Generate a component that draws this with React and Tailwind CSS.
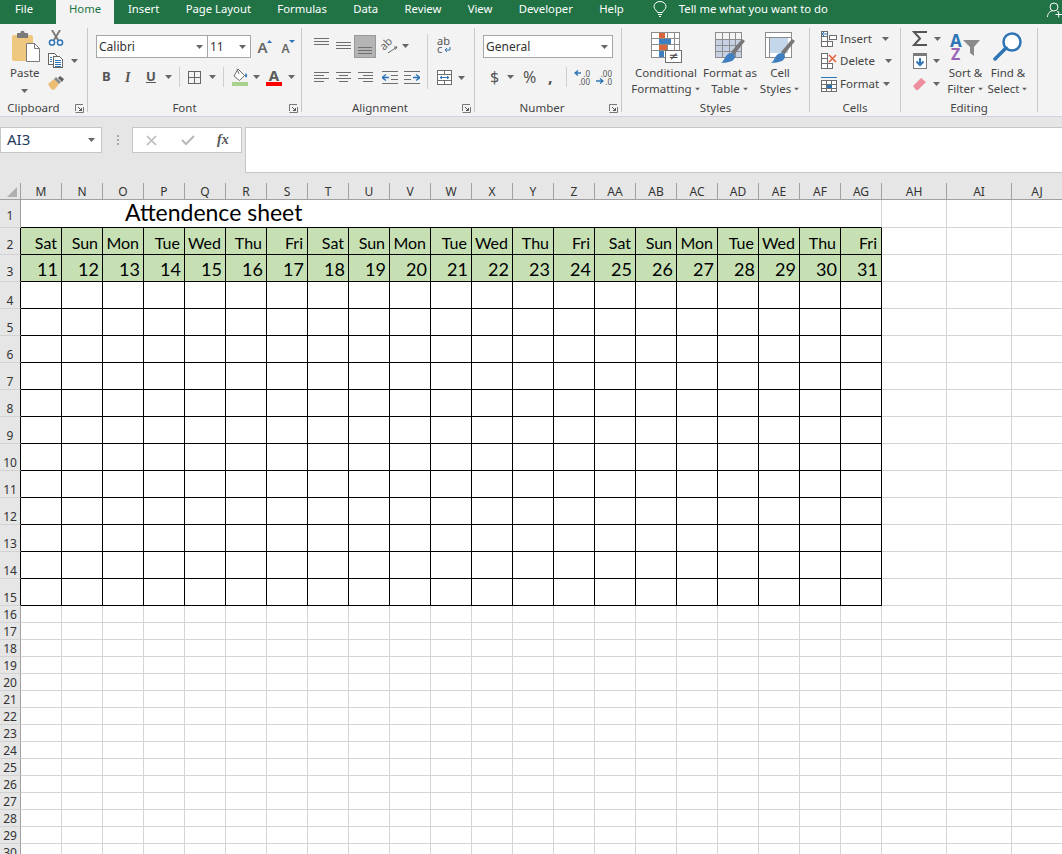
import React from "react";

const columns = ["M","N","O","P","Q","R","S","T","U","V","W","X","Y","Z","AA","AB","AC","AD","AE","AF","AG"];
const days = ["Sat","Sun","Mon","Tue","Wed","Thu","Fri","Sat","Sun","Mon","Tue","Wed","Thu","Fri","Sat","Sun","Mon","Tue","Wed","Thu","Fri"];
const dates = [11,12,13,14,15,16,17,18,19,20,21,22,23,24,25,26,27,28,29,30,31];
const rows = Array.from({ length: 30 }, (_, i) => i + 1);

function Caret({ className = "" }) {
  return (
    <svg width="7" height="4" viewBox="0 0 7 4" className={`shrink-0 ${className}`}>
      <path d="M0 0h7L3.5 4z" fill="#666" />
    </svg>
  );
}

function Sep({ className = "" }) {
  return <div className={`w-px shrink-0 bg-[#cfcfcf] ${className}`} />;
}

function Launcher() {
  return (
    <svg width="9" height="9" viewBox="0 0 9 9" className="shrink-0">
      <path d="M.5 7V.5H8M.5 8.5h8V3" fill="none" stroke="#777" />
      <path d="M3 3l3.5 3.5M6.5 4v2.5H4" fill="none" stroke="#555" />
    </svg>
  );
}

function Group({ label, className = "", labelClass = "", launcher = false, children }) {
  return (
    <div className={`mt-[4px] flex h-[84px] shrink-0 flex-col border-r border-[#c8c8c8] ${className}`}>
      <div className="h-[72px]">{children}</div>
      <div className="flex h-[12px] items-start">
        <div className={`flex-1 text-center text-[11.5px] leading-[16px] text-[#444] ${labelClass}`}>{label}</div>
        {launcher ? <div className="mr-[3px] mt-[4px]"><Launcher /></div> : null}
      </div>
    </div>
  );
}

function Combo({ text, className = "", caretClass = "" }) {
  return (
    <div className={`flex h-[23px] shrink-0 items-center justify-between border border-[#a6a6a6] bg-white pl-[2px] text-[12px] text-[#333] ${className}`}>
      <span>{text}</span>
      <Caret className={caretClass} />
    </div>
  );
}

function Lines({ d, w = 15, h = 8 }) {
  return (
    <svg width={w} height={h} viewBox={`0 0 ${w} ${h}`} className="shrink-0" shapeRendering="crispEdges">
      <path d={d} stroke="#6e6e6e" fill="none" />
    </svg>
  );
}

function Indent({ flip }) {
  return (
    <svg width="16" height="13" viewBox="0 0 16 13" className="shrink-0" shapeRendering="crispEdges">
      <path d={flip ? "M0 .5h16M0 12.5h16M0 4.5h7M0 8.5h7" : "M0 .5h16M0 12.5h16M9 4.5h7M9 8.5h7"} stroke="#6e6e6e" fill="none" />
      <path d={flip ? "M9 6.5h7M12 3.5l4 3-4 3" : "M0 6.5h7M4 3.5l-4 3 4 3"} stroke="#2f75b5" strokeWidth="1.4" fill="none" shapeRendering="auto" />
    </svg>
  );
}

function PasteIcon() {
  return (
    <svg width="30" height="32" viewBox="0 0 30 32" className="block">
      <rect x="1" y="5" width="21" height="26" rx="2" fill="#edc87e" />
      <rect x="6" y="3" width="11" height="5" fill="#7b7b7b" />
      <circle cx="11.5" cy="3" r="2.2" fill="#7b7b7b" />
      <path d="M15.5 13.5h8l5 5v13h-13z" fill="#fff" stroke="#7a7a7a" />
      <path d="M23.5 13.5v5h5" fill="none" stroke="#7a7a7a" />
    </svg>
  );
}

function ScissorsIcon() {
  return (
    <svg width="16" height="16" viewBox="0 0 16 16" className="block">
      <path d="M4 0l6 10M12 0L6 10" stroke="#757575" strokeWidth="1.8" fill="none" />
      <circle cx="4" cy="12.5" r="2.6" stroke="#2f75b5" strokeWidth="1.5" fill="none" />
      <circle cx="12" cy="12.5" r="2.6" stroke="#2f75b5" strokeWidth="1.5" fill="none" />
    </svg>
  );
}

function CopyIcon() {
  return (
    <svg width="15" height="15" viewBox="0 0 15 15" className="block shrink-0" shapeRendering="crispEdges">
      <path d="M.5.5h6l2 2v9h-8z" fill="#fff" stroke="#666" />
      <path d="M5.5 3.5h6l3 3v8h-9z" fill="#fff" stroke="#666" />
      <path d="M2 4h2M2 6h2M2 8h2M7 7h6M7 9h6M7 11h6M7 13h6" stroke="#2f75b5" />
    </svg>
  );
}

function PainterIcon() {
  return (
    <svg width="16" height="15" viewBox="0 0 16 15" className="block">
      <path d="M0 8l6-5 5 5-5 6-3-1z" fill="#edbd74" />
      <path d="M6 3l5 5 2-2-5-5z" fill="#8a8a8a" />
      <path d="M10 2l2-2 4 3-2 3z" fill="#5f5f5f" />
    </svg>
  );
}

function BordersIcon() {
  return (
    <svg width="13" height="13" viewBox="0 0 13 13" className="shrink-0" shapeRendering="crispEdges">
      <path d="M.5.5h12v12H.5zM6.5 0v13M0 6.5h13" fill="none" stroke="#666" />
    </svg>
  );
}

function FillIcon() {
  return (
    <svg width="16" height="18" viewBox="0 0 16 18" className="shrink-0">
      <path d="M6 1l6.5 6.5L7.5 12.5 2 8z" fill="#fff" stroke="#6e6e6e" />
      <path d="M5 1l2 5" stroke="#6e6e6e" />
      <path d="M14 5c1.5 2 1.5 4 0 4.5-1.5-.5-1.5-2.5 0-4.5z" fill="#2f75b5" />
      <rect y="14" width="16" height="4" fill="#a9d18e" />
    </svg>
  );
}

function FontColorIcon() {
  return (
    <svg width="16" height="18" viewBox="0 0 16 18" className="shrink-0 overflow-visible">
      <text x="8" y="13" textAnchor="middle" fontSize="15" fontWeight="700" fill="#5a5a5a" fontFamily="Noto Sans">A</text>
      <rect y="14" width="16" height="4" fill="#ff0000" />
    </svg>
  );
}

function GrowIcon({ down }) {
  return (
    <svg width="15" height="15" viewBox="0 0 15 15" className="shrink-0 overflow-visible">
      <text x="5.5" y="14" textAnchor="middle" fontSize={down ? 12 : 15} fontWeight="600" fill="#666" fontFamily="Noto Sans">A</text>
      <path d={down ? "M9 1h6l-3 3z" : "M10 4l2.5-3L15 4z"} fill="#2f75b5" />
    </svg>
  );
}

function OrientationIcon() {
  return (
    <svg width="16" height="17" viewBox="0 0 16 17" className="shrink-0 overflow-visible">
      <text x="1" y="14" transform="rotate(-45 1 14)" fontSize="11" fill="#666" fontFamily="Noto Sans">ab</text>
      <path d="M5 16l9-6M14 10l-3 0M14 10l-1.500 2.500" stroke="#666" fill="none" />
    </svg>
  );
}

function WrapIcon() {
  return (
    <svg width="14" height="17" viewBox="0 0 14 17" className="shrink-0 overflow-visible">
      <text x="0" y="8" fontSize="11" fill="#555" fontFamily="Noto Sans">ab</text>
      <text x="0" y="16" fontSize="11" fill="#555" fontFamily="Noto Sans">c</text>
      <path d="M13 10v3H8M10 11l-2 2 2 2" stroke="#2f75b5" fill="none" />
    </svg>
  );
}

function MergeIcon() {
  return (
    <svg width="15" height="15" viewBox="0 0 15 15" className="shrink-0" shapeRendering="crispEdges">
      <path d="M.5.5h14v14H.5zM0 4.500h15M0 10.500h15M7.500 0v4M7.500 11v4M.5 4.500v6M14.500 4.500v6" fill="#fff" stroke="#6e6e6e" />
      <path d="M3 7.500h9M3 7.500l2-1.500M3 7.500l2 1.500M12 7.500l-2-1.500M12 7.500l-2 1.500" stroke="#2f75b5" fill="none" shapeRendering="auto" />
    </svg>
  );
}

function DecimalIcon({ more }) {
  return (
    <svg width="16" height="15" viewBox="0 0 16 15" className="shrink-0 overflow-visible">
      <text x="16" y="6.500" textAnchor="end" fontSize="8" fill="#555" fontFamily="Noto Sans">{more ? ".00" : ".0"}</text>
      <text x="16" y="14.500" textAnchor="end" fontSize="8" fill="#555" fontFamily="Noto Sans">{more ? ".0" : ".00"}</text>
      {more ? (
        <path d="M0 11h6M4 8.500L7 11l-3 2.500" stroke="#2f75b5" strokeWidth="1.300" fill="none" />
      ) : (
        <path d="M7 3H1M4 .5L1 3l3 2.500" stroke="#2f75b5" strokeWidth="1.300" fill="none" />
      )}
    </svg>
  );
}

function CondFormatIcon() {
  return (
    <svg width="31" height="31" viewBox="0 0 31 31" className="block overflow-visible">
      <path d="M.5.5h28v25H.5zM8 0v26M16 0v26M23 0v26M0 6h29M0 12h29M0 18h29" fill="#fff" stroke="#8c8c8c" shapeRendering="crispEdges" />
      <rect x="8" y="1" width="6" height="5" fill="#d9653b" />
      <rect x="8" y="7" width="12" height="5" fill="#3f7fbf" />
      <rect x="8" y="13" width="8" height="5" fill="#d9653b" />
      <rect x="8" y="19" width="5" height="6" fill="#3f7fbf" />
      <rect x="14.500" y="18.500" width="16" height="12" fill="#fff" stroke="#6e6e6e" />
      <text x="22.500" y="28" textAnchor="middle" fontSize="12" fill="#444" fontFamily="DejaVu Sans">≠</text>
    </svg>
  );
}

function BrushStroke() {
  return (
    <>
      <path d="M19 23L30 9l-3-2-11 13z" fill="#777" />
      <path d="M6 31c2-1 3-4 5-7 2-3 6-4 8-2 2 2 1 5-2 7-2 1-8 2-11 2z" fill="#3f7fbf" />
    </>
  );
}

function TableStyleIcon() {
  return (
    <svg width="31" height="31" viewBox="0 0 31 31" className="block">
      <rect x="1" y="7" width="26" height="18" fill="#c6d2e3" />
      <path d="M.5.5h26v25H.5zM0 7h27M0 13h27M0 19h27M7 0v26M14 0v26M20 0v26" fill="none" stroke="#8c8c8c" shapeRendering="crispEdges" />
      <BrushStroke />
    </svg>
  );
}

function CellStyleIcon() {
  return (
    <svg width="31" height="31" viewBox="0 0 31 31" className="block">
      <rect x="1" y="1" width="26" height="24" fill="#fff" />
      <rect x="5" y="6" width="18" height="15" fill="#c3d6ea" />
      <path d="M.5.5h26v25H.5zM0 5.500h27M4.500 6v20" fill="none" stroke="#8c8c8c" shapeRendering="crispEdges" />
      <BrushStroke />
    </svg>
  );
}

function InsertCellsIcon() {
  return (
    <svg width="16" height="16" viewBox="0 0 16 16" className="shrink-0" shapeRendering="crispEdges">
      <path d="M.5.5h6v5h-6zM.5 5.500h6v5h-6zM.5 10.500h6v5h-6zM6.500 10.500h5v5h-5zM8.500 4.500h7v4h-7z" fill="#fff" stroke="#6e6e6e" />
      <path d="M1 3h6M3 1L1 3l2 2" stroke="#2f75b5" fill="none" shapeRendering="auto" />
    </svg>
  );
}

function DeleteCellsIcon() {
  return (
    <svg width="16" height="16" viewBox="0 0 16 16" className="shrink-0">
      <path d="M.5.5h6v5h-6zM.5 5.500h6v5h-6zM.5 10.500h6v5h-6zM6.500 10.500h5v5h-5z" fill="#fff" stroke="#6e6e6e" shapeRendering="crispEdges" />
      <path d="M8 2l7 7M15 2L8 9" stroke="#e2603a" strokeWidth="1.500" />
    </svg>
  );
}

function FormatCellsIcon() {
  return (
    <svg width="16" height="16" viewBox="0 0 16 16" className="shrink-0" shapeRendering="crispEdges">
      <path d="M.5 4.500h15v11H.5zM0 8.500h16M0 12h16M5.500 4v12M10.500 4v12" fill="#fff" stroke="#6e6e6e" />
      <rect x="6" y="9" width="5" height="3" fill="#2f75b5" />
      <path d="M0 1.500h16" stroke="#2f75b5" />
    </svg>
  );
}

function SumIcon() {
  return (
    <svg width="16" height="15" viewBox="0 0 16 15" className="block">
      <path d="M15 1H2l6 6.500L2 14h13" fill="none" stroke="#555" strokeWidth="2" />
    </svg>
  );
}

function FillDownIcon() {
  return (
    <svg width="14" height="16" viewBox="0 0 14 16" className="block">
      <rect x=".5" y=".5" width="13" height="15" fill="#fff" stroke="#7a7a7a" />
      <rect width="14" height="3" fill="#7a7a7a" />
      <path d="M7 5v7M3.500 8.500L7 12l3.500-3.500" fill="none" stroke="#2f75b5" strokeWidth="2" />
    </svg>
  );
}

function EraserIcon() {
  return (
    <svg width="14" height="14" viewBox="0 0 14 14" className="block">
      <path d="M0 9l8-8 5 4-8 8H3z" fill="#ee8d9c" />
    </svg>
  );
}

function SortIcon() {
  return (
    <svg width="31" height="29" viewBox="0 0 31 29" className="block overflow-visible">
      <text x="0" y="15" fontSize="17" fontWeight="700" fill="#2f75b5" fontFamily="Noto Sans">A</text>
      <text x="1" y="28" fontSize="16" fontWeight="700" fill="#9a63b8" fontFamily="Noto Sans">Z</text>
      <path d="M13 8h17l-6 7v9l-4-3v-6z" fill="#8a8a8a" />
    </svg>
  );
}

function FindIcon() {
  return (
    <svg width="30" height="29" viewBox="0 0 30 29" className="block">
      <circle cx="19" cy="10" r="8.500" fill="#fff" stroke="#2f75b5" strokeWidth="2.500" />
      <path d="M13 16L2 27" stroke="#2f75b5" strokeWidth="3.500" strokeLinecap="round" />
    </svg>
  );
}

function BulbIcon() {
  return (
    <svg width="14" height="17" viewBox="0 0 14 17" className="block shrink-0">
      <path d="M4.500 11.500C4 9.500 1 8.500 1 5.500a6 5 0 0 1 12 0c0 3-3 4-3.500 6z" fill="none" stroke="#fff" />
      <path d="M5 13.500h4M6 15.500h2" stroke="#fff" />
    </svg>
  );
}

function PersonIcon() {
  return (
    <svg width="15" height="16" viewBox="0 0 15 16" className="block shrink-0">
      <circle cx="7" cy="5" r="4" fill="none" stroke="#fff" />
      <path d="M.5 15c0-3.500 2.500-6 5-6M10 9.500l1 .5" fill="none" stroke="#fff" />
      <path d="M8.500 12.500h6.500M11.700 9.500v6" stroke="#fff" />
    </svg>
  );
}

function LargeButton({ icon, top, bottom, className = "" }) {
  return (
    <div className={`flex shrink-0 flex-col items-center pt-[4px] text-[11.5px] leading-[16px] text-[#444] ${className}`}>
      <div className="mb-[2px] h-[31px]">{icon}</div>
      <div className="whitespace-nowrap">{top}</div>
      <div className="flex items-center whitespace-nowrap">
        {bottom}
        <Caret className="ml-[2px] scale-75" />
      </div>
    </div>
  );
}

function Ribbon() {
  return (
    <div className="flex h-[92px] bg-[#f3f3f3]">
      <Group label="Clipboard" className="w-[88px]" labelClass="pr-[8px]" launcher>
        <div className="flex">
          <div className="ml-[10px] flex w-[38px] flex-col pt-[2px] text-[11.5px] leading-[16px] text-[#444]">
            <div className="ml-[1px] h-[33px]"><PasteIcon /></div>
            <div className="mt-[2px]">Paste</div>
            <Caret className="ml-[11px] mt-[8px]" />
          </div>
          <div className="flex flex-col pt-[2px]">
            <ScissorsIcon />
            <div className="mt-[7px] flex items-center">
              <CopyIcon />
              <Caret className="ml-[8px]" />
            </div>
            <div className="mt-[8px]"><PainterIcon /></div>
          </div>
        </div>
      </Group>

      <Group label="Font" className="w-[214px]" labelClass="pr-[8px]" launcher>
        <div className="flex items-center pl-[8px] pt-[7px]">
          <Combo text="Calibri" className="w-[112px]" caretClass="mr-[4px]" />
          <Combo text="11" className="-ml-px w-[44px]" caretClass="mr-[4px]" />
          <div className="ml-[6px]"><GrowIcon /></div>
          <div className="ml-[8px]"><GrowIcon down /></div>
        </div>
        <div className="mt-[8px] flex h-[22px] items-center text-[#555]">
          <span className="ml-[14px] w-[8px] text-[13px] font-bold">B</span>
          <span className="ml-[15px] w-[7px] font-['Liberation_Serif',serif] text-[14px] font-bold italic">I</span>
          <span className="ml-[14px] w-[9px] text-[13px] font-bold underline">U</span>
          <Caret className="ml-[10px]" />
          <Sep className="ml-[7px] h-[20px]" />
          <div className="ml-[8px]"><BordersIcon /></div>
          <Caret className="ml-[8px]" />
          <Sep className="ml-[7px] h-[20px]" />
          <div className="ml-[8px]"><FillIcon /></div>
          <Caret className="ml-[5px]" />
          <div className="ml-[6px]"><FontColorIcon /></div>
          <Caret className="ml-[6px]" />
        </div>
      </Group>

      <Group label="Alignment" className="w-[173px]" labelClass="pr-[4px]" launcher>
        <div className="flex">
          <div className="w-[125px] shrink-0 pl-[12px] pt-[7px]">
            <div className="flex h-[23px] items-start">
              <div className="mt-[3px]"><Lines d="M0 .5h15M0 3.500h15M0 6.500h15" /></div>
              <div className="ml-[7px] mt-[7px]"><Lines d="M0 .5h15M0 3.500h15M0 6.500h15" /></div>
              <div className="ml-[3px] flex h-[23px] w-[22px] items-end justify-center border border-[#9a9a9a] bg-[#b4b4b4] pb-[2px]">
                <Lines d="M0 .5h14M0 3.500h14M0 6.500h14" w={14} />
              </div>
              <div className="ml-[7px] mt-[2px]"><OrientationIcon /></div>
              <Caret className="ml-[3px] mt-[9px]" />
            </div>
            <div className="mt-[8px] flex h-[22px] items-center">
              <Lines d="M0 .5h15M0 3.500h10M0 6.500h15M0 9.500h10" h={10} />
              <div className="ml-[7px]"><Lines d="M0 .5h15M3 3.500h9M0 6.500h15M3 9.500h9" h={10} /></div>
              <div className="ml-[7px]"><Lines d="M0 .5h15M5 3.500h10M0 6.500h15M5 9.500h10" h={10} /></div>
              <div className="ml-[9px]"><Indent /></div>
              <div className="ml-[6px]"><Indent flip /></div>
            </div>
          </div>
          <Sep className="mt-[6px] h-[55px]" />
          <div className="pl-[9px] pt-[9px]">
            <WrapIcon />
            <div className="mt-[16px] flex items-center">
              <MergeIcon />
              <Caret className="ml-[6px]" />
            </div>
          </div>
        </div>
      </Group>

      <Group label="Number" className="w-[147px]" launcher>
        <div className="pl-[8px] pt-[7px]">
          <Combo text="General" className="w-[130px]" caretClass="mr-[4px]" />
        </div>
        <div className="mt-[8px] flex h-[22px] items-center text-[#555]">
          <span className="ml-[15px] w-[9px] text-[16px]">$</span>
          <Caret className="ml-[8px]" />
          <span className="ml-[9px] w-[14px] text-[16px]">%</span>
          <span className="ml-[11px] w-[4px] text-[16px] font-bold leading-[16px]">,</span>
          <Sep className="ml-[14px] h-[20px]" />
          <div className="ml-[7px]"><DecimalIcon /></div>
          <div className="ml-[6px]"><DecimalIcon more /></div>
        </div>
      </Group>

      <Group label="Styles" className="w-[188px]">
        <div className="flex pl-[6px]">
          <LargeButton className="w-[76px]" icon={<CondFormatIcon />} top="Conditional" bottom="Formatting" />
          <LargeButton className="w-[52px]" icon={<TableStyleIcon />} top="Format as" bottom="Table" />
          <LargeButton className="w-[48px]" icon={<CellStyleIcon />} top="Cell" bottom="Styles" />
        </div>
      </Group>

      <Group label="Cells" className="w-[91px]">
        <div className="pl-[11px] text-[11.5px] text-[#444]">
          <div className="flex h-[21px] items-center">
            <InsertCellsIcon />
            <span className="ml-[3px]">Insert</span>
            <Caret className="ml-[10px]" />
          </div>
          <div className="flex h-[23px] items-center">
            <DeleteCellsIcon />
            <span className="ml-[3px]">Delete</span>
            <Caret className="ml-[10px]" />
          </div>
          <div className="flex h-[23px] items-center">
            <FormatCellsIcon />
            <span className="ml-[3px]">Format</span>
            <Caret className="ml-[4px]" />
          </div>
        </div>
      </Group>

      <Group label="Editing" className="w-[137px]">
        <div className="flex pl-[11px]">
          <div className="w-[33px] shrink-0 pt-[3px]">
            <div className="flex items-center">
              <div className="w-[16px]"><SumIcon /></div>
              <Caret className="ml-[6px]" />
            </div>
            <div className="mt-[7px] flex items-center">
              <div className="w-[16px] pl-[1px]"><FillDownIcon /></div>
              <Caret className="ml-[5px]" />
            </div>
            <div className="mt-[8px] flex items-center">
              <div className="w-[16px] pl-[1px]"><EraserIcon /></div>
              <Caret className="ml-[5px]" />
            </div>
          </div>
          <LargeButton className="w-[41px]" icon={<SortIcon />} top="Sort &" bottom="Filter" />
          <LargeButton className="w-[44px]" icon={<FindIcon />} top="Find &" bottom="Select" />
        </div>
      </Group>
    </div>
  );
}

function TitleBar() {
  const tabs = ["Insert", "Page Layout", "Formulas", "Data", "Review", "View", "Developer", "Help"];
  return (
    <div className="flex h-[24px] items-start bg-[#217346] text-[11.3px] leading-[18px] text-white">
      <div className="w-[48px] text-center">File</div>
      <div className="ml-[8px] h-[24px] w-[58px] bg-[#f3f3f3] text-center text-[#217346]">Home</div>
      <div className="ml-[14px] flex gap-[26.3px]">
        {tabs.map((tab) => (
          <span key={tab}>{tab}</span>
        ))}
      </div>
      <div className="ml-[29px] mt-[1px]"><BulbIcon /></div>
      <span className="ml-[12px]">Tell me what you want to do</span>
      <div className="ml-auto mt-[2px]"><PersonIcon /></div>
    </div>
  );
}

function FormulaBar() {
  return (
    <div className="flex h-[66px] items-start bg-[#e6e6e6] pt-[10px]">
      <div className="flex h-[26px] w-[102px] items-center justify-between border border-[#c6c6c6] bg-white pl-[6px] pr-[6px] text-[15px] leading-[20px] text-[#1f3a5f]">
        <span className="mb-[3px]">AI3</span>
        <Caret />
      </div>
      <div className="ml-[15px] mt-[8px] flex w-[15px] flex-col gap-[2px]">
        <div className="h-[2px] w-[2px] bg-[#a8a8a8]" />
        <div className="h-[2px] w-[2px] bg-[#a8a8a8]" />
        <div className="h-[2px] w-[2px] bg-[#a8a8a8]" />
      </div>
      <div className="flex h-[26px] w-[110px] items-center border border-[#c6c6c6] bg-white">
        <svg width="11" height="11" viewBox="0 0 11 11" className="ml-[13px]">
          <path d="M1 1l9 9M10 1l-9 9" stroke="#b8b8b8" strokeWidth="1.500" />
        </svg>
        <svg width="14" height="11" viewBox="0 0 14 11" className="ml-[24px]">
          <path d="M1 5l4 4 8-8" stroke="#b8b8b8" strokeWidth="2" fill="none" />
        </svg>
        <span className="mb-[2px] ml-[22px] font-['Liberation_Serif',serif] text-[14px] font-bold italic text-[#555]">fx</span>
      </div>
      <div className="ml-[3px] h-[46px] flex-1 border-b border-l border-t border-[#c6c6c6] bg-white" />
    </div>
  );
}

function RowHeader({ row }) {
  const black = row >= 2 && row <= 15;
  let leading = "leading-[14px]";
  if (row === 1) leading = "leading-[22px]";
  if (row === 2 || row === 3) leading = "leading-[18px]";
  return (
    <div className={`flex items-end justify-center border-b border-r border-b-[#d2d2d2] bg-[#e6e6e6] text-[12px] text-[#333] ${leading} ${black ? "border-r-black" : "border-r-[#a0a0a0]"}`}>
      {row}
    </div>
  );
}

function Sheet() {
  return (
    <div className="grid grid-cols-[21px_repeat(21,41px)_65px_65px_51px] grid-rows-[17px_28px_repeat(14,27px)_repeat(15,17px)]">
      <div className="flex items-end justify-end border-b border-r border-[#a0a0a0] bg-[#e6e6e6] pb-[2px] pr-[3px]">
        <svg width="10" height="10" viewBox="0 0 10 10"><path d="M10 0v10H0z" fill="#b0b0b0" /></svg>
      </div>
      {[...columns, "AH", "AI", "AJ"].map((col) => (
        <div key={col} className="flex items-center justify-center border-b border-r border-[#a0a0a0] bg-[#e6e6e6] pt-[1px] text-[12px] leading-[15px] text-[#333]">
          {col}
        </div>
      ))}

      {rows.map((row) => (
        <React.Fragment key={row}>
          <RowHeader row={row} />
          {row === 1 ? (
            <div className="col-span-21 flex items-end border-b border-r border-b-black border-r-[#d4d4d4] bg-white pl-[104px] font-['Lato',sans-serif] text-[23px] leading-[30px] text-black">
              Attendence sheet
            </div>
          ) : (
            columns.map((col, i) => {
              if (row === 2 || row === 3) {
                return (
                  <div
                    key={col}
                    className={`flex items-end justify-end border-b border-r border-black bg-[#c6e0b4] font-['Lato',sans-serif] text-black ${row === 2 ? "pr-[4px] text-[16px] leading-[22px]" : "pr-[3px] text-[18px] leading-[24px]"}`}
                  >
                    {row === 2 ? days[i] : dates[i]}
                  </div>
                );
              }
              return (
                <div key={col} className={`border-b border-r bg-white ${row <= 15 ? "border-black" : "border-[#d4d4d4]"}`} />
              );
            })
          )}
          <div className="border-b border-r border-[#d4d4d4] bg-white" />
          <div className="border-b border-r border-[#d4d4d4] bg-white" />
          <div className="border-b border-[#d4d4d4] bg-white" />
        </React.Fragment>
      ))}
    </div>
  );
}

export default function App() {
  return (
    <div className="h-[854px] w-[1062px] overflow-hidden bg-white font-['Noto_Sans',sans-serif]">
      <TitleBar />
      <Ribbon />
      <div className="h-px bg-[#d6cfe0]" />
      <FormulaBar />
      <Sheet />
    </div>
  );
}
